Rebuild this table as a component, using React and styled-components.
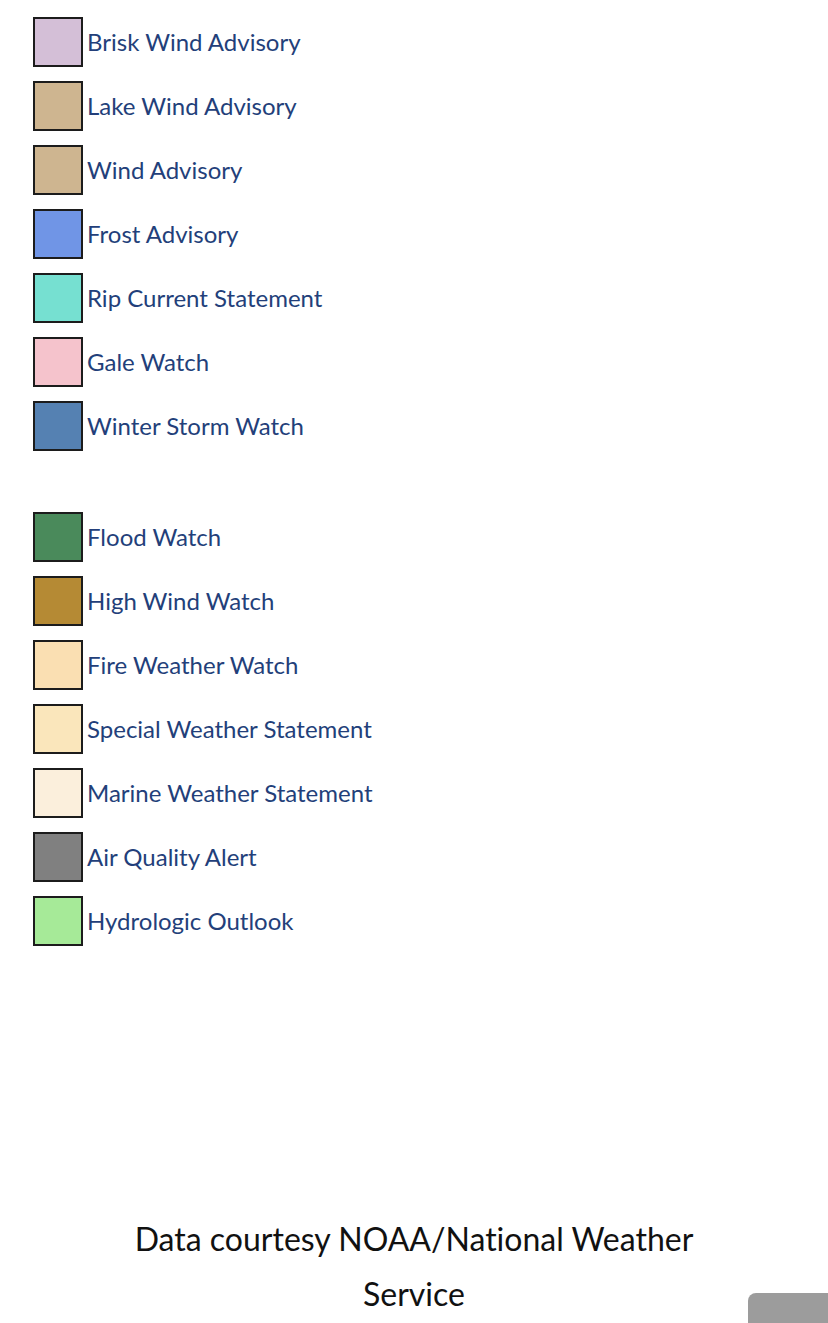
import React from 'react';
import styled, { createGlobalStyle } from 'styled-components';

const GlobalStyle = createGlobalStyle`
  html, body {
    margin: 0;
    padding: 0;
    background: #ffffff;
    font-family: Lato, "Open Sans", "Liberation Sans", sans-serif;
  }
`;

const Page = styled.div`
  width: 828px;
  height: 1323px;
  position: relative;
  overflow: hidden;
  display: flex;
  flex-direction: column;
`;

const Legend = styled.div`
  display: flex;
  flex-direction: column;
  padding: 17px 0 0 33px;
`;

const Group = styled.div`
  display: flex;
  flex-direction: column;
  gap: 14px;
  & + & {
    margin-top: 61px;
  }
`;

const Row = styled.div`
  display: flex;
  align-items: center;
  gap: 4px;
  height: 50px;
`;

const Swatch = styled.span`
  box-sizing: border-box;
  width: 50px;
  height: 50px;
  border: 2px solid #1c1c1c;
  background: ${({ $color }) => $color};
  flex-shrink: 0;
`;

const Label = styled.span`
  font-size: 24px;
  color: #233f7a;
  padding-bottom: 2px;
`;

const Footer = styled.div`
  margin-top: auto;
  padding: 0 110px 2px;
  text-align: center;
  font-size: 32px;
  line-height: 55px;
  color: #111111;
  font-variant-ligatures: none;
`;

const ScrollTab = styled.div`
  position: absolute;
  right: 0;
  bottom: 0;
  width: 80px;
  height: 30px;
  background: #9c9c9c;
  border-top-left-radius: 8px;
`;

const advisories = [
  ['Brisk Wind Advisory', '#d4bfd7'],
  ['Lake Wind Advisory', '#ceb590'],
  ['Wind Advisory', '#ceb590'],
  ['Frost Advisory', '#7095e6'],
  ['Rip Current Statement', '#76e0d1'],
  ['Gale Watch', '#f5c3cc'],
  ['Winter Storm Watch', '#5581b2'],
];

const watches = [
  ['Flood Watch', '#4a8a5b'],
  ['High Wind Watch', '#b58a34'],
  ['Fire Weather Watch', '#fadfb2'],
  ['Special Weather Statement', '#fae6bb'],
  ['Marine Weather Statement', '#fbefdc'],
  ['Air Quality Alert', '#808080'],
  ['Hydrologic Outlook', '#a6ea98'],
];

const LegendGroup = ({ items }) => (
  <Group>
    {items.map(([name, color]) => (
      <Row key={name}>
        <Swatch $color={color} />
        <Label>{name}</Label>
      </Row>
    ))}
  </Group>
);

export default function App() {
  return (
    <Page>
      <GlobalStyle />
      <Legend>
        <LegendGroup items={advisories} />
        <LegendGroup items={watches} />
      </Legend>
      <Footer>Data courtesy NOAA/National Weather Service</Footer>
      <ScrollTab />
    </Page>
  );
}
